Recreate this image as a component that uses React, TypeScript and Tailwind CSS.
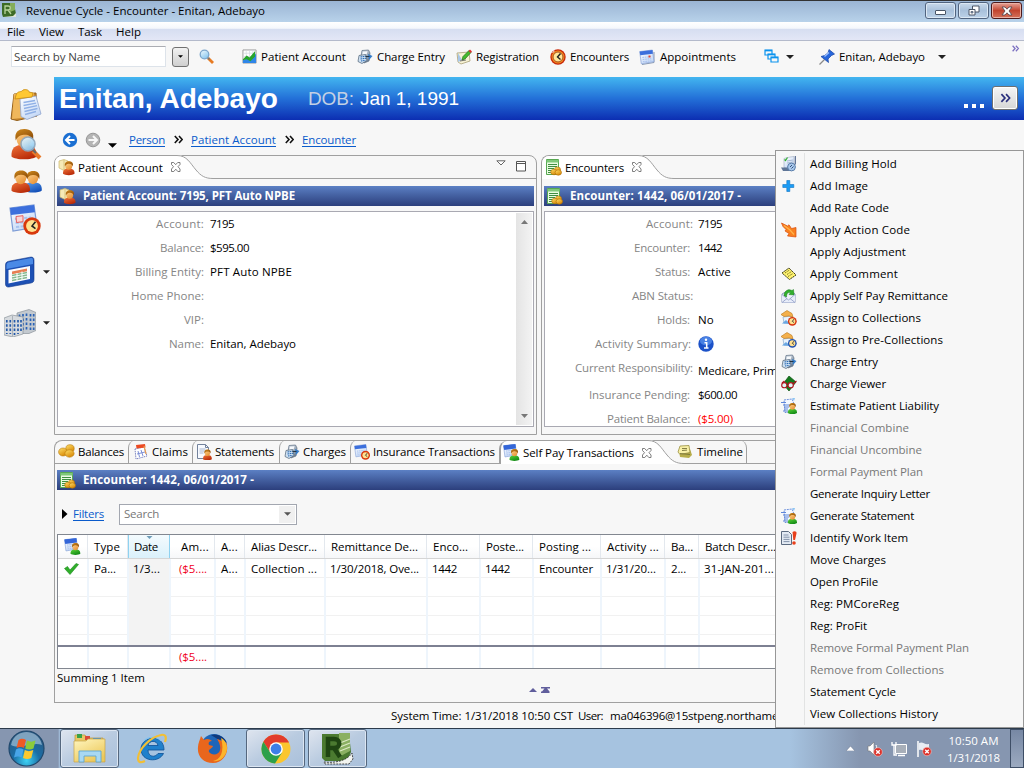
import React, { useLayoutEffect, useRef, useState } from "react";
import type { ReactNode } from "react";

/* ---------- text ---------- */

/** One line of text whose letter spacing is tuned so that it fills exactly `w` pixels. */
function Fit({ w, children, className = "" }: { w: number; children: string; className?: string }) {
  const ref = useRef<HTMLSpanElement>(null);
  const [spacing, setSpacing] = useState(0);
  useLayoutEffect(() => {
    if (ref.current) {
      const natural = ref.current.getBoundingClientRect().width;
      setSpacing((w - natural) / children.length);
    }
  }, [w, children]);
  return (
    <span className={`block shrink-0 whitespace-pre ${className}`} style={{ width: w }}>
      <span ref={ref} style={{ letterSpacing: spacing }}>
        {children}
      </span>
    </span>
  );
}

/* ---------- icons ---------- */

function Svg({ w = 16, h = 16, vb, children, className = "" }: { w?: number; h?: number; vb?: string; children: ReactNode; className?: string }) {
  return (
    <svg width={w} height={h} viewBox={vb ?? `0 0 ${w} ${h}`} className={`block shrink-0 ${className}`} fill="none">
      {children}
    </svg>
  );
}

function Gradients() {
  const list: [string, string, string][] = [
    ["gOrange", "#ffcf7a", "#c96a10"],
    ["gRed", "#f0743a", "#b82a08"],
    ["gBlue", "#5aa2ee", "#1450b8"],
    ["gGreen", "#5fd83a", "#128a16"],
    ["gPaper", "#ffffff", "#c4d8f6"],
    ["gGold", "#ffe06a", "#d98a08"],
    ["gYellow", "#fff6bf", "#ecc85a"],
    ["gGrey", "#dfe6ee", "#6f8195"],
    ["gGlass", "#f0faff", "#8cc8ee"],
    ["gHead", "#ffd690", "#e8953a"],
    ["gHair", "#d08a1c", "#8c4c08"],
  ];
  return (
    <svg width="0" height="0" className="absolute">
      <defs>
        {list.map(([id, a, b]) => (
          <linearGradient key={id} id={id} x1="0" y1="0" x2="0.6" y2="1">
            <stop offset="0" stopColor={a} />
            <stop offset="1" stopColor={b} />
          </linearGradient>
        ))}
      </defs>
    </svg>
  );
}

const Bust = ({ x, y, s = 1, fill = "url(#gRed)" }: { x: number; y: number; s?: number; fill?: string }) => (
  <g transform={`translate(${x} ${y}) scale(${s})`}>
    <path d="M0 11C-.2 7.500 1.500 6.300 5 6.300s5.200 1.200 5 4.700c-1.500 1.500-8.500 1.500-10 0Z" fill={fill} />
    <ellipse cx="5" cy="3.900" rx="3" ry="3.500" fill="url(#gHead)" />
    <path d="M1.700 4.600C1 1.200 2.800 0 5.200 0s4.200 1.400 3.300 4.600C8 3 7 2.300 5.400 2.300 4 2.300 2.600 2.600 1.700 4.600Z" fill="url(#gHair)" />
  </g>
);

const Clock = ({ x, y, r, rim = "#d8380c" }: { x: number; y: number; r: number; rim?: string }) => (
  <g>
    <circle cx={x} cy={y} r={r} fill={rim} />
    <circle cx={x} cy={y} r={r * 0.68} fill="#ffe090" />
    <path d={`M${x + r * 0.4} ${y - r * 0.5}L${x} ${y}L${x + r * 0.4} ${y + r * 0.3}`} stroke="#222" strokeWidth={r * 0.18} />
  </g>
);

const Cal = ({ x, y, s = 1 }: { x: number; y: number; s?: number }) => (
  <g transform={`translate(${x} ${y}) scale(${s})`}>
    <path d="M0 1.500L12 0l1.500 11L1.500 13Z" fill="url(#gPaper)" stroke="#7d9cd6" strokeWidth=".6" />
    <path d="M0 1.500L12 0l.5 3.600L.5 5Z" fill="#3c6fdc" />
    <path d="M2.500 7l8-.8M2.800 9l8-.8M3 11l8-.8" stroke="#a9c2ee" strokeWidth="1" strokeDasharray="1.600 .7" />
  </g>
);

const AppIcon = () => (
  <Svg w={15} h={16}>
    <path d="M0 1h12l2 11-3 3H1L0 12Z" fill="#3d6b26" />
    <path d="M8 1h5v7l-5 2Z" fill="#84ad5b" />
    <path d="M3 12V4h3c3 0 3 4 0 4H3m3 0l3 4" stroke="#b8d49c" strokeWidth="1.300" />
    <path d="M1 15l10-1 3-3v4Z" fill="#dfe5da" />
  </Svg>
);
const Magnifier = () => (
  <Svg>
    <path d="M9 9l5 5" stroke="#e77b22" strokeWidth="2.800" />
    <path d="M8 8l2.500 2.500" stroke="#777" strokeWidth="1.600" />
    <circle cx="5.500" cy="5.500" r="4.300" fill="url(#gGlass)" stroke="#7ca6cc" strokeWidth="1.300" />
  </Svg>
);
const ChartIcon = () => (
  <Svg w={15} h={15} vb="0 0 16 16">
    <path d="M1 1h14v14H1Z" fill="#fff" stroke="#9a9a9a" />
    <path d="M1 4.500h14M1 8h14M4.500 1v14M8 1v14M11.500 1v14" stroke="#cfd6dd" strokeWidth=".7" />
    <path d="M1 12l4-2 3 1 7-6v10H1Z" fill="#2f86e8" />
    <path d="M1 11l4-4 3 2 6-7v6l-5 5-4-2-4 1Z" fill="#27a52a" />
  </Svg>
);
const ChargeIcon = () => (
  <Svg>
    <path d="M5 1.500l6.500-.5L13 4l-1 8-5 2L3.500 10Z" fill="url(#gGrey)" stroke="#5d6f82" strokeWidth=".7" />
    <path d="M6 2.800l4.500-.5-.8 3-4.500.6Z" fill="#f6f9fc" />
    <path d="M2 6.500L8.500 5.500 10 11.500 5 14.500 1 12.500Z" fill="#cfe1f2" stroke="#4c6074" strokeWidth=".7" />
    <path d="M3.500 8l5-.7M3.500 10l5.500-.7M4 12l4.500-.7" stroke="#2466b0" strokeWidth="1.100" strokeDasharray="1.500 .6" />
    <path d="M11 5l4.500 2-3.500 4Z" fill="#347cc9" />
    <path d="M8.500 7.500h4" stroke="#234" strokeWidth="1" />
  </Svg>
);
const PencilIcon = () => (
  <Svg>
    <path d="M1 4l12-1 1 9-9 3-3-2Z" fill="#f7f2d4" stroke="#a99f77" strokeWidth=".8" />
    <path d="M2 4l4 7-4 2Z" fill="#a8c7ea" />
    <path d="M6 11l1-3.500L13 1.500l2 2L9 10Z" fill="#45bb2d" stroke="#207017" strokeWidth=".7" />
    <path d="M12.500 2l1.500-1.500L16 2.500 14.500 4Z" fill="#dd3030" />
    <path d="M4 12l6-1" stroke="#555" strokeWidth=".8" />
  </Svg>
);
const ClockIcon = () => (
  <Svg>
    <circle cx="8" cy="8" r="7.700" fill="#c9290a" />
    <circle cx="8" cy="8" r="6.400" fill="#f08a20" />
    <circle cx="8" cy="8" r="4.900" fill="#ffe79a" stroke="#8c2a08" strokeWidth=".7" />
    <path d="M10.500 4.500L7.500 8l3 2.500" stroke="#222" strokeWidth="1.400" />
    <path d="M2.500 3.500l2-1.300" stroke="#fff" strokeWidth="1" />
  </Svg>
);
const CalIcon = () => (
  <Svg>
    <path d="M3 15.500l12-2V3" stroke="#8b9ab0" strokeWidth="1" />
    <Cal x={0.700} y={1} s={1.060} />
    <path d="M9.500 6.500h2v2h-2Z" fill="#e8452c" />
  </Svg>
);
const WindowsIcon = () => (
  <Svg w={15} h={15}>
    {[[1, 1], [4, 5], [7, 8]].map(([x, y]) => (
      <g key={x}>
        <path d={`M${x} ${y}h7v5h-7Z`} fill="#f7f7f7" stroke="#0b93ee" strokeWidth="1.200" />
        <path d={`M${x} ${y + 0.6}h7`} stroke="#0b93ee" strokeWidth="1.500" />
      </g>
    ))}
  </Svg>
);
const PinIcon = () => (
  <Svg>
    <path d="M.5 15.500l5-5" stroke="#8a8a8a" strokeWidth="1.300" />
    <path d="M2 7.500l3.500-1L9 4l1-3.500 5.500 4.500-3 1.500L9 10l.5 3.500Z" fill="#2867dc" stroke="#1743a0" strokeWidth=".7" />
    <path d="M5.500 7.500L10 3.500" stroke="#9dc1ff" strokeWidth="1.400" />
  </Svg>
);
const Down = ({ w = 8, h = 4, fill = "#222" }: { w?: number; h?: number; fill?: string }) => (
  <Svg w={w} h={h} vb="0 0 8 4">
    <path d="M0 0h8L4 4Z" fill={fill} />
  </Svg>
);
const Chevrons = ({ w = 9, h = 9, color = "#111", sw = 1.6 }: { w?: number; h?: number; color?: string; sw?: number }) => (
  <Svg w={w} h={h} vb="0 0 9 9">
    <path d="M.8 1L4 4.500.8 8M5 1l3.200 3.500L5 8" stroke={color} strokeWidth={sw} />
  </Svg>
);
const CloseX = () => (
  <Svg w={12} h={12}>
    <path d="M1.500 1.500h2.200l2 2.200 2-2.200h2.300v2L8 5.700l2 2.300v2.500H7.800l-2-2.300-2 2.300H1.500V8l2-2.300-2-2.200Z" stroke="#707070" strokeWidth=".9" fill="#fff" />
  </Svg>
);
const PersonFolder = () => (
  <Svg w={17} h={17}>
    <path d="M1 2l5-1.500L10 2v8l-4 1.500L1 9Z" fill="#f6eab6" stroke="#cbb76d" strokeWidth=".7" />
    <path d="M6 1v10" stroke="#cbb76d" strokeWidth=".7" />
    <Bust x={5} y={2.200} s={1.150} />
  </Svg>
);
const ListCoins = () => (
  <Svg w={17} h={17}>
    <path d="M1.500.5h12v15h-12Z" fill="#eafbe2" stroke="#57a851" />
    <path d="M1.500 1h12v2.500h-12Z" fill="#7fc87a" />
    <path d="M3 5.500h9M3 7.500h9M3 9.500h6M3 11.500h4M3 13.500h4" stroke="#3f8e42" strokeWidth="1" />
    <ellipse cx="12.500" cy="10.500" rx="3" ry="2.600" fill="url(#gGold)" stroke="#b06c04" strokeWidth=".6" />
    <ellipse cx="9" cy="13" rx="3.300" ry="2.800" fill="url(#gGold)" stroke="#b06c04" strokeWidth=".6" />
    <ellipse cx="13.300" cy="13.500" rx="3.200" ry="2.700" fill="url(#gGold)" stroke="#b06c04" strokeWidth=".6" />
  </Svg>
);
const Coins = () => (
  <Svg w={17} h={15}>
    <ellipse cx="12" cy="4.500" rx="4.200" ry="3.800" fill="url(#gGold)" stroke="#b87a08" strokeWidth=".6" />
    <ellipse cx="5" cy="8" rx="4.400" ry="4" fill="url(#gGold)" stroke="#b87a08" strokeWidth=".6" />
    <ellipse cx="11.500" cy="9.500" rx="4.600" ry="3.700" fill="url(#gGold)" stroke="#b87a08" strokeWidth=".6" />
  </Svg>
);
const ClaimsIcon = () => (
  <Svg>
    <path d="M2 5l9-2 3 9-11 3Z" fill="#fff" stroke="#6b74b8" strokeWidth=".9" strokeDasharray="1.500 .8" />
    <path d="M3 1l9-1 .5 3.500-9 1Z" fill="#ec4a22" />
    <path d="M5 7l1.500 6M8 6l2 6M4 10l8-2" stroke="#7c8fd6" strokeWidth="1" />
    <path d="M11 2l2 8" stroke="#e89a50" strokeWidth="1.200" />
  </Svg>
);
const StatementIcon = () => (
  <Svg>
    <path d="M1.500.5h8l3 3v11h-11Z" fill="#f7faff" stroke="#73829c" />
    <path d="M9.500.5v3h3" stroke="#73829c" />
    <path d="M3.500 5h6M3.500 7h6M3.500 9h4" stroke="#a8b6cf" />
    <Bust x={7} y={5.500} s={0.880} />
  </Svg>
);
const CalClock = () => (
  <Svg>
    <Cal x={0.500} y={0.500} s={0.950} />
    <Clock x={11.500} y={11.300} r={4.500} />
  </Svg>
);
const CalPerson = () => (
  <Svg w={17} h={17}>
    <Cal x={0.500} y={0.200} s={0.980} />
    <path d="M.6 1.600L12.300.200l.5 4.400L1.200 6Z" fill="#3466d8" />
    <Bust x={6.500} y={5} s={0.980} fill="url(#gGreen)" />
  </Svg>
);
const TimelineIcon = () => (
  <Svg w={16} h={14}>
    <path d="M2 5l11-1 2 6-3 3-9-1Z" fill="#b7ad4a" />
    <path d="M3 1l9-.5 1 7-10 2L1 7Z" fill="#f7efa6" stroke="#9a9140" strokeWidth=".8" />
    <path d="M5 3.500h5M5 5.500l5-.4M3 8.500l10 1" stroke="#777338" strokeWidth=".9" />
  </Svg>
);
const Check = () => (
  <Svg w={15} h={12}>
    <path d="M.5 5.500L3.500 3.500l2.500 3.500 6-6.500 2.500 1L6 11.500Z" fill="#2fae2a" stroke="#1b8a1e" strokeWidth=".6" />
  </Svg>
);
const Info = () => (
  <Svg>
    <circle cx="8" cy="8" r="7.700" fill="#1c52c8" />
    <ellipse cx="8" cy="5" rx="6" ry="4.300" fill="#5b95ef" opacity=".7" />
    <path d="M6.500 6.700h2.200v5M6 12h4.500" stroke="#fff" strokeWidth="1.500" />
    <circle cx="8" cy="3.800" r="1.200" fill="#fff" />
  </Svg>
);

/* context menu icons */
const HoldIcon = () => (
  <Svg>
    <path d="M3 2.500l6-1.500 4-.5v9l-7 3-3-1Z" fill="url(#gPaper)" stroke="#9aa8c0" strokeWidth=".6" />
    <path d="M3.500 3.500l1 1 2-3" stroke="#2fae2a" strokeWidth="1.200" />
    <path d="M6 5l6-1M6 7l6-1" stroke="#a9bad4" />
    <path d="M0 11.500h7l3 3.500H2Z" fill="#5f7596" />
    <circle cx="10.500" cy="11" r="3.900" fill="#a9c8ec" stroke="#587ca8" />
    <path d="M9 11l2-2M10.500 12.500l2-2" stroke="#33527c" />
    <path d="M14.300 0v8.500" stroke="#3f5680" />
  </Svg>
);
const PlusIcon = () => (
  <Svg>
    <path d="M5.800 2.500h3v4h4v3h-4v4h-3v-4h-4v-3h4Z" fill="#1a9bf4" stroke="#0d74c4" strokeWidth=".6" />
  </Svg>
);
const BoltIcon = () => (
  <Svg>
    <path d="M.5 1l6 3 1.500-1.200 2.500 3.700 4.500-1v9.500l-8.500-1 1.500-2.500-4-2.500 1-1.500-3-3Z" fill="#f9801f" stroke="#d94a0b" strokeWidth=".7" />
    <path d="M3 3.500l6 4.500 4 4.500" stroke="#ffb44a" strokeWidth="1.200" />
  </Svg>
);
const NoteIcon = () => (
  <Svg>
    <path d="M1 7l7-5 7 7-6.500 4.500Z" fill="#fff36e" stroke="#3a3a18" strokeWidth="1" strokeDasharray="2 .6" />
    <path d="M4 7l4.500-3M6 8.500l4.500-3M7 10.500l5-3" stroke="#6b6420" strokeWidth=".9" strokeDasharray="1.300 .6" />
  </Svg>
);
const EnvelopeIcon = () => (
  <Svg>
    <path d="M1 6l7-4 6 4v8.500H1Z" fill="#eef2fb" stroke="#7e8cb8" strokeWidth=".9" />
    <path d="M3 8C3 3 7 .5 11 2.500L12.500 1.500 13 7l-5-.5 1.600-1.700C7 4 5.500 5.500 5.500 9Z" fill="#32b02d" stroke="#187a1a" strokeWidth=".5" />
    <path d="M1 6.500l6.500 5.500L14 6.500v8H1Z" fill="#e8edfa" />
    <path d="M1 6.500l6.500 5.500L14 6.500M1 14.500l5-4M14 14.500l-5-4" stroke="#8d99c4" strokeWidth=".8" />
  </Svg>
);
const AssignIcon = ({ rim }: { rim: string }) => (
  <Svg>
    <path d="M2 7l9-1 1 6-9 1Z" fill="#e9f3fd" stroke="#8aa9cc" strokeWidth=".7" />
    <path d="M0 4.500l6-4 5 3 1 3.500-4-1-5 .5Z" fill="#f4b04c" stroke="#b87514" strokeWidth=".6" />
    <path d="M1 13.500l4-3.500 4 4Z" fill="#6aa7e2" />
    <Clock x={11.300} y={11.300} r={4.400} rim={rim} />
  </Svg>
);
const ViewerIcon = () => (
  <Svg>
    <path d="M8 0l7 6-7 9-6-7Z" fill="#14791c" stroke="#0a5210" strokeWidth=".7" />
    <circle cx="3.300" cy="9.200" r="2.600" fill="#dff6f6" stroke="#b0141e" strokeWidth="1.100" />
    <circle cx="9.700" cy="9.200" r="2.600" fill="#dff6f6" stroke="#b0141e" strokeWidth="1.100" />
    <path d="M1 7l2.500-2M12 8l3.500-3" stroke="#b0141e" strokeWidth="1.200" />
  </Svg>
);
const PapersPerson = () => (
  <Svg>
    <path d="M3 2l8-1 2 5-1 8-8 .5Z" fill="#f4f8ff" stroke="#5f86d8" strokeWidth=".9" strokeDasharray="2 .8" />
    <path d="M0 4.500h5M2 7h7M3 9h5M3 11h4M2 13h5" stroke="#5f86d8" strokeWidth="1" />
    <path d="M11 0h3l-1 3Z" fill="#8cc4f4" />
    <Bust x={6.800} y={5} s={0.920} fill="url(#gGreen)" />
  </Svg>
);
const WorkIcon = () => (
  <Svg>
    <path d="M.5 1.500h7l3 3v10H.5Z" fill="#e3eaf3" stroke="#5c6b80" />
    <path d="M2.500 5h5M2.500 7.200h6M2.500 9.400h6M2.500 11.600h6" stroke="#8493aa" />
    <path d="M11.500 2c2-1.500 4.500-.5 4 1.500L14 10h-1.700Z" fill="#e8401c" />
    <circle cx="13" cy="13" r="1.800" fill="#e8401c" />
  </Svg>
);

/* side bar icons */
const ClipboardIcon = () => (
  <Svg w={32} h={33}>
    <path d="M4 5l22-1 1 23-20 4.500L1 30Z" fill="#c9872c" stroke="#94601c" />
    <path d="M4 5l20-1-3 24L2 30Z" fill="#efb75c" />
    <path d="M10 10l16-3 5 18-14 5.500-6-3Z" fill="url(#gPaper)" stroke="#90a6cf" strokeWidth=".8" />
    <path d="M13.500 13.500l11.500-2M13.500 16.500l12.500-2.300M14 19.500l13-2.800M14.500 22.500l13-3M15 25.500l11-3" stroke="#8fb0e6" strokeWidth="1.300" />
    <path d="M6 6c2-5 5-2 7-5 3-1 6 0 6 2l4 1-1 4-17 2Z" fill="#ffc832" stroke="#c98c0e" strokeWidth=".8" />
  </Svg>
);
const PersonSearch = () => (
  <Svg w={32} h={32}>
    <Bust x={0.500} y={0} s={2.500} />
    <path d="M22 22l7 7" stroke="#e8792a" strokeWidth="4" />
    <path d="M21 20l4 4" stroke="#666" strokeWidth="2" />
    <circle cx="17" cy="15" r="7" fill="url(#gGlass)" stroke="#8fa9c0" strokeWidth="1.600" opacity=".95" />
  </Svg>
);
const People = () => (
  <Svg w={32} h={24}>
    <Bust x={13} y={1} s={1.780} fill="url(#gBlue)" />
    <Bust x={0.500} y={0.500} s={1.850} />
  </Svg>
);
const BigCalClock = () => (
  <Svg w={33} h={33}>
    <Cal x={1} y={1} s={2} />
    <path d="M7 12.500l7-.8v6l-6.500.8Z" stroke="#e66060" fill="#fbd5d5" />
    <Clock x={23} y={22} r={8.700} />
  </Svg>
);
const BigForm = () => (
  <Svg w={30} h={32}>
    <path d="M.5 8.500C1 6 2 5.500 5 5L25 1.200c2.500-.4 4 .3 4 3V23c0 2.500-.5 3.300-3 4L4 31c-2 .3-3.500-.6-3.500-3Z" fill="#1d50b4" stroke="#143a8c" strokeWidth=".6" />
    <path d="M1.500 9C2 6.500 3 6.300 5 6L25 2.200c2-.3 3 0 3 2V8L1.500 13Z" fill="#4a8ae6" />
    <path d="M3.500 14L25 10v13L3.500 27.500Z" fill="#fbfcff" />
    <path d="M7 15.500l15-3v2.700l-15 3Z" fill="#e77e52" />
    <path d="M7 19.500l15-3M7 22l15-3M7 24.500l15-3" stroke="#86b98e" strokeWidth="1.300" />
    <path d="M12 17v8M17 15.500V24" stroke="#fff" />
  </Svg>
);
const Buildings = () => (
  <Svg w={32} h={28}>
    <path d="M13 4l12-3.500 7 3v18l-7 3H13Z" fill="#c3c9cf" stroke="#7d868f" strokeWidth=".6" />
    <path d="M15.500 5.500v16M19 5v16M22.500 4.500v17M26.500 5v16M29.700 5v16" stroke="#2a62b6" strokeWidth="1.700" strokeDasharray="2.500 2" />
    <path d="M0 9l8-3 11 2v17l-10 3L0 26Z" fill="#d6dade" stroke="#7d868f" strokeWidth=".6" />
    <path d="M2.800 11v14M6.300 11v14M10.500 11v15M14 11v14M17 11v12" stroke="#2459a8" strokeWidth="1.700" strokeDasharray="2.500 1.800" />
    <path d="M8.500 7v20.500" stroke="#979fa7" strokeWidth=".7" />
  </Svg>
);

/* task bar icons */
const StartOrb = () => (
  <Svg w={37} h={37}>
    <defs>
      <radialGradient id="orb" cx=".5" cy=".85" r=".75">
        <stop offset="0" stopColor="#3ed2f4" />
        <stop offset=".5" stopColor="#1a6ea6" />
        <stop offset="1" stopColor="#2b5c86" />
      </radialGradient>
    </defs>
    <circle cx="18.500" cy="18.500" r="17.500" fill="url(#orb)" stroke="#20486c" strokeWidth="1.200" />
    <path d="M3 15C5 5 13 2 18.500 2S32 5 34 15C25 11 12 20 3 15Z" fill="#c4dcec" opacity=".55" />
    <path d="M10.500 10c3-2 5-1.500 7.500 0l-2 8c-2.500-1.500-4.500-1.500-7.500 0Z" fill="#ee5a25" />
    <path d="M19 10.500c3 1.500 5 1.500 8.500 0l-2 8c-3 1.500-5.500 1.300-8.300 0Z" fill="#8ccb3c" />
    <path d="M8 19.500c3-2 5-1.500 7.500 0l-2 8c-2.500-1.500-4.500-1.500-7.500 0Z" fill="#48a5e8" />
    <path d="M16.800 20c3 1.500 5 1.500 8.500 0l-2 8c-3 1.500-5.500 1.300-8.300 0Z" fill="#fcc92e" />
  </Svg>
);
const Explorer = () => (
  <Svg w={34} h={31}>
    <path d="M2 2h10l2 3h16v23H2Z" fill="#e8c766" stroke="#b9963c" strokeWidth=".7" />
    <path d="M4 1h5v4H4Z" fill="#39a148" />
    <path d="M12 3h5v4h-5Z" fill="#d84a3a" />
    <path d="M20 5h8v3h-8Z" fill="#3e8fd8" />
    <path d="M1 8h12l2-2h17v23H1Z" fill="url(#gYellow)" stroke="#c6a548" strokeWidth=".7" />
    <path d="M6 18h22v11h-5v-6H11v6H6Z" fill="#a8d8f2" stroke="#5fa6d0" strokeWidth=".9" />
  </Svg>
);
const IE = () => (
  <Svg w={32} h={32}>
    <path d="M28 17H12c0 7 7 8 10 3.500h5.500C23 30 5 29 5 16S28 0 28 17Zm-6-4.500c-1-5.500-9-5.500-10 0Z" fill="#1f80cc" stroke="#0d4f94" strokeWidth=".8" />
    <path d="M8 8C12 3 21 3 25 8" stroke="#7cc4f4" strokeWidth="1.200" />
    <path d="M29 9c2-6 0-8-4-7C15 4 3 15 2 25c0 5 3 5 7 3" stroke="#f2bf35" strokeWidth="2.200" />
  </Svg>
);
const Firefox = () => (
  <Svg w={32} h={32}>
    <circle cx="17" cy="14" r="13" fill="#1d65b8" />
    <path d="M14 2c7-2 14 2 16 8-3-3-6-4-8-3Z" fill="#0f3a7e" />
    <path d="M4 3l3 4c3-2 6-1 8 1-3 0-4 2-3 4l4 1c-1 3-5 3-4 6 3 4 10 3 11-2 1-4-1-8-3-11 5 1 8 5 8 5l1-2c4 9-2 21-13 21C6 30 0 23 1 14c0-4 2-7 3-11Z" fill="#e9661c" />
    <path d="M24 5c6 3 8 11 4 17-3 5-8 7-12 6 7-1 12-9 8-23Z" fill="#fbb52c" />
  </Svg>
);
const Chrome = () => (
  <Svg w={30} h={30}>
    <circle cx="15" cy="15" r="14.500" fill="#fbc62e" />
    <path d="M2.400 7.700A14.500 14.500 0 0 1 27.600 7.700L28 8.500H15L9 18Z" fill="#e23c2c" />
    <path d="M2.400 7.700A14.500 14.500 0 0 0 14 29.500L21 18.500 9 18Z" fill="#2da04b" />
    <circle cx="15" cy="15" r="6.800" fill="#fff" />
    <circle cx="15" cy="15" r="5.400" fill="#3d7fe8" />
  </Svg>
);
const GreenR = () => (
  <Svg w={33} h={33}>
    <path d="M1 2h27l2 18-4 9H4L1 26Z" fill="#4b7a30" />
    <path d="M18 1h11v18l-11 6Z" fill="#8bb062" />
    <path d="M19 11l10-4M19 15l10-4M19 19l10-4" stroke="#dbe9c4" strokeWidth="1.200" />
    <path d="M7 25V7h6c7 0 7 9 0 9H7m6 0l6 9" stroke="#1f4512" strokeWidth="4.500" />
    <path d="M3 30c9 1 22 0 28-9l1 6-4 5H4Z" fill="#f2f4f0" stroke="#222" strokeWidth=".8" strokeDasharray="2 1" />
  </Svg>
);
const RedBadge = ({ x, y }: { x: number; y: number }) => (
  <g>
    <circle cx={x} cy={y} r="4.300" fill="#dc2f28" stroke="#f4c8c4" strokeWidth=".6" />
    <path d={`M${x - 1.8} ${y - 1.8}l3.600 3.600m0-3.600l-3.600 3.600`} stroke="#fff" strokeWidth="1.400" />
  </g>
);
const Speaker = () => (
  <Svg>
    <path d="M1 5h2l4-4v13L3 10H1Z" fill="#fff" stroke="#777" strokeWidth=".6" />
    <path d="M9 4c1 2 1 4 0 6" stroke="#fff" />
    <RedBadge x={11} y={11} />
  </Svg>
);
const Network = () => (
  <Svg>
    <path d="M4.500 3.500h11v9h-11Z" fill="#a8afb9" stroke="#fff" />
    <path d="M7 14.500h7" stroke="#fff" strokeWidth="1.500" />
    <path d="M1 1v3h4V1M3 4v10h3" stroke="#fff" strokeWidth="1.300" />
  </Svg>
);
const Flag = () => (
  <Svg>
    <path d="M2 0v16" stroke="#fff" strokeWidth="1.500" />
    <path d="M3 2c4-2 5 2 10 1v7c-5 1-6-2-10-1Z" fill="#e9edf3" />
    <RedBadge x={11} y={10.500} />
  </Svg>
);

/* ---------- window chrome ---------- */

const captionBtn = "flex items-center justify-center h-[17px] w-[31px] rounded-[3px] border border-[#51647f] bg-gradient-to-b from-[#c9d9ea] via-[#a9c1db] to-[#bcd2e8] shadow-[inset_0_0_0_1px_#dce8f4]";

function TitleBar() {
  return (
    <div className="flex h-[22px] items-center border-t border-[#333] bg-gradient-to-b from-[#9bb5d4] to-[#b8d2ea] pl-[2px]">
      <div className="-mt-[4px]"><AppIcon /></div>
      <Fit w={239} className="-mt-[1px] ml-[9px]">Revenue Cycle - Encounter - Enitan, Adebayo</Fit>
      <div className="mr-[2px] ml-auto flex gap-[2px] pb-[2px]">
        <div className={captionBtn}>
          <div className="mt-[4px] h-[5px] w-[11px] rounded-[1px] border border-[#4a5566] bg-white" />
        </div>
        <div className={captionBtn}>
          <Svg w={12} h={11}>
            <path d="M4.500 1h6.500v6H4.500Z" fill="#fff" stroke="#4a5566" />
            <path d="M1 4.500h6v5.500H1Z" fill="#fff" stroke="#4a5566" />
            <path d="M3 6.500h2v1.500H3Z" fill="#91abc9" stroke="#4a5566" strokeWidth=".7" />
          </Svg>
        </div>
        <div className="flex h-[17px] w-[31px] items-center justify-center rounded-[3px] border border-[#4d1a1c] bg-gradient-to-b from-[#e6a197] via-[#c1442f] to-[#d4705a] shadow-[inset_0_0_0_1px_#eab2a6]">
          <Svg w={12} h={10}>
            <path d="M1 1h3l2 2.200L8 1h3L8 5l3 4H8L6 6.800 4 9H1l3-4Z" fill="#fff" stroke="#5a4a50" strokeWidth=".9" />
          </Svg>
        </div>
      </div>
    </div>
  );
}

function MenuBar() {
  return (
    <div className="flex h-[19px] items-center border-b border-[#b4bacb] bg-[linear-gradient(#ffffff_0%,#f4f7fc_35%,#d6def1_40%,#e3e7f6_100%)] pt-[2px] pl-[7px]">
      <Fit w={18}>File</Fit>
      <Fit w={25} className="ml-[14px]">View</Fit>
      <Fit w={24} className="ml-[14px]">Task</Fit>
      <Fit w={25} className="ml-[14px]">Help</Fit>
    </div>
  );
}

function ToolBar() {
  return (
    <div className="relative flex h-[36px] items-center pb-[5px] pl-[11px]">
      <div className="flex h-[21px] w-[155px] items-center border border-[#dde3ea] border-t-[#abadb3] bg-white pl-[2px] text-[#444]">
        <Fit w={86}>Search by Name</Fit>
      </div>
      <div className="ml-[6px] flex h-[20px] w-[17px] items-center justify-center rounded-[3px] border border-[#707070] bg-gradient-to-b from-[#f2f2f2] to-[#cfcfcf]">
        <Down w={5} h={3} fill="#000" />
      </div>
      <div className="ml-[10px]"><Magnifier /></div>
      <div className="ml-[27px]"><ChartIcon /></div>
      <Fit w={85} className="ml-[4px]">Patient Account</Fit>
      <div className="ml-[11px]"><ChargeIcon /></div>
      <Fit w={68} className="ml-[4px]">Charge Entry</Fit>
      <div className="ml-[11px]"><PencilIcon /></div>
      <Fit w={63} className="ml-[4px]">Registration</Fit>
      <div className="ml-[11px]"><ClockIcon /></div>
      <Fit w={59} className="ml-[4px]">Encounters</Fit>
      <div className="ml-[10px]"><CalIcon /></div>
      <Fit w={76} className="ml-[5px]">Appointments</Fit>
      <div className="ml-[28px]"><WindowsIcon /></div>
      <div className="ml-[7px]"><Down /></div>
      <div className="ml-[25px]"><PinIcon /></div>
      <Fit w={86} className="ml-[4px]">Enitan, Adebayo</Fit>
      <div className="ml-[13px]"><Down /></div>
      <div className="mr-[4px] mb-[17px] ml-auto"><Chevrons w={9} h={7} color="#7b6fc0" /></div>
    </div>
  );
}

function SideBar() {
  return (
    <div className="flex w-[54px] shrink-0 flex-col pt-[12px] pl-[10px]">
      <ClipboardIcon />
      <div className="mt-[7px] ml-[1px]"><PersonSearch /></div>
      <div className="mt-[9px] ml-[1px]"><People /></div>
      <div className="mt-[10px] -ml-[1px]"><BigCalClock /></div>
      <div className="mt-[19px] -ml-[5px] flex items-center gap-[8px]"><BigForm /><Down w={7} h={4} /></div>
      <div className="mt-[21px] -ml-[6px] flex items-center gap-[7px]"><Buildings /><Down w={7} h={4} /></div>
    </div>
  );
}

function Banner() {
  return (
    <div className="flex h-[43px] items-center bg-[linear-gradient(#43b6f0,#2370d8_50%,#0c2eb2)] pr-[6px] pl-[5px] font-[Liberation_Sans,Arial,sans-serif] text-white">
      <Fit w={219} className="text-[28px] leading-[40px] font-bold">Enitan, Adebayo</Fit>
      <Fit w={46} className="ml-[30px] text-[19px] text-[#c3d0e4]">DOB:</Fit>
      <Fit w={99} className="ml-[6px] text-[19px]">Jan 1, 1991</Fit>
      <div className="mt-[14px] ml-auto flex gap-[4px]">
        <i className="size-[4px] bg-white" />
        <i className="size-[4px] bg-white" />
        <i className="size-[4px] bg-white" />
      </div>
      <div className="mb-[2px] ml-[8px] flex h-[24px] w-[26px] items-center justify-center rounded-[3px] border border-[#707070] bg-gradient-to-b from-[#f6f6f6] to-[#d6d6d6] shadow-[inset_0_0_0_1px_#fff]">
        <Chevrons w={11} h={10} color="#2a2f7c" sw={1.5} />
      </div>
    </div>
  );
}

const link = "text-[#0a5bcb] underline underline-offset-[1.5px]";

function Breadcrumb() {
  return (
    <div className="flex h-[35px] items-center pt-[4px] pl-[8px]">
      <Svg w={16} h={16}>
        <circle cx="8" cy="8" r="7.200" fill="#1b6fd2" />
        <path d="M12.500 8H4.500M8 4L4 8l4 4" stroke="#fff" strokeWidth="2" />
      </Svg>
      <div className="ml-[7px]">
        <Svg w={16} h={16}>
          <circle cx="8" cy="8" r="6.800" fill="#b4b4b4" stroke="#979797" />
          <path d="M3.500 8h8M8 4l4 4-4 4" stroke="#f7f7f7" strokeWidth="2" />
        </Svg>
      </div>
      <div className="mt-[11px] ml-[7px]"><Down w={9} h={5} fill="#000" /></div>
      <Fit w={36} className={`ml-[12px] ${link}`}>Person</Fit>
      <div className="ml-[9px]"><Chevrons /></div>
      <Fit w={85} className={`ml-[8px] ${link}`}>Patient Account</Fit>
      <div className="ml-[9px]"><Chevrons /></div>
      <Fit w={54} className={`ml-[8px] ${link}`}>Encounter</Fit>
    </div>
  );
}

/* ---------- view panels ---------- */

const TabCurve = () => (
  <Svg w={36} h={24}>
    <path d="M0 0C10 0 13 8 19 15c5 6 9 8.500 17 8.500V24H0Z" fill="#fff" />
    <path d="M0 .5C10 .5 13 8 19 15c5 6 9 8.500 17 8.500" stroke="#a0a0a0" />
  </Svg>
);

const TitleStrip = ({ icon, children, className = "mt-[7px]" }: { icon: ReactNode; children: ReactNode; className?: string }) => (
  <div className={`mx-[2px] flex h-[20px] shrink-0 items-center gap-[7px] bg-gradient-to-b from-[#5c80c4] to-[#2c3f7c] pl-[2px] font-bold text-white ${className}`}>
    {icon}
    {children}
  </div>
);

function ScrollBar() {
  return (
    <div className="my-[1px] mr-[1px] ml-auto flex w-[16px] shrink-0 flex-col items-center justify-between bg-gradient-to-r from-[#e4e4e4] to-[#f3f3f3] py-[7px]">
      <Svg w={7} h={4}><path d="M0 4h7L3.500 0Z" fill="#777" /></Svg>
      <Svg w={7} h={4}><path d="M0 0h7L3.500 4Z" fill="#777" /></Svg>
    </div>
  );
}

const accountFields: [string, number, string, number][] = [
  ["Account:", 48, "7195", 24],
  ["Balance:", 44, "$595.00", 39],
  ["Billing Entity:", 69, "PFT Auto NPBE", 82],
  ["Home Phone:", 73, "", 0],
  ["VIP:", 20, "", 0],
  ["Name:", 35, "Enitan, Adebayo", 86],
];

function PatientAccountPanel() {
  return (
    <section className="flex h-[280px] w-[483px] shrink-0 flex-col rounded-t-[8px] border border-[#a0a0a0]">
      <div className="-mt-[1px] flex h-[24px] shrink-0">
        <div className="mt-[1px] flex w-[122px] items-center rounded-tl-[7px] bg-white pl-[3px]">
          <PersonFolder />
          <Fit w={85} className="ml-[3px]">Patient Account</Fit>
          <div className="z-10 -mr-[5px] mb-[1px] ml-auto"><CloseX /></div>
        </div>
        <TabCurve />
        <div className="flex flex-1 justify-end gap-[10px] border-b border-[#a0a0a0] pr-[10px]">
          <Svg w={10} h={6} className="mt-[5px]"><path d="M.8.800h8.400L5 5Z" stroke="#666" fill="#fff" /></Svg>
          <Svg w={10} h={11} className="mt-[6px]"><path d="M.5.500h9v9.500h-9ZM.5 2.500h9" stroke="#555" fill="#fff" /></Svg>
        </div>
      </div>
      <TitleStrip icon={<PersonFolder />}>
        <Fit w={212}>Patient Account: 7195, PFT Auto NPBE</Fit>
      </TitleStrip>
      <div className="mx-[2px] mt-[5px] mb-[7px] flex flex-1 border border-[#a9a9b2] bg-white">
        <div>
          {accountFields.map(([label, lw, value, vw]) => (
            <div key={label} className="flex h-[24px] items-center">
              <div className="mr-[6px] flex w-[146px] justify-end text-[#868686]"><Fit w={lw}>{label}</Fit></div>
              {value && <Fit w={vw}>{value}</Fit>}
            </div>
          ))}
        </div>
        <ScrollBar />
      </div>
    </section>
  );
}

function EncountersPanel() {
  const label = "flex w-[148px] justify-end text-[#868686]";
  const row = "flex h-[24px] items-center gap-[5px]";
  return (
    <section className="flex h-[280px] flex-1 flex-col rounded-tl-[8px] border border-r-0 border-[#a0a0a0]">
      <div className="-mt-[1px] flex h-[24px] shrink-0">
        <div className="mt-[1px] flex w-[96px] items-center rounded-tl-[7px] bg-white pl-[3px]">
          <ListCoins />
          <Fit w={59} className="ml-[3px]">Encounters</Fit>
          <div className="z-10 mb-[1px] ml-[7px]"><CloseX /></div>
        </div>
        <TabCurve />
        <div className="flex-1 border-b border-[#a0a0a0]" />
      </div>
      <div className="-mr-[2px] flex flex-1 flex-col">
        <TitleStrip icon={<ListCoins />}>
          <Fit w={171}>Encounter: 1442, 06/01/2017 -</Fit>
        </TitleStrip>
        <div className="mx-[2px] mt-[5px] mb-[7px] h-[216px] overflow-hidden border border-[#a9a9b2] bg-white">
          <div className={row}><div className={label}><Fit w={47}>Account:</Fit></div><Fit w={24}>7195</Fit></div>
          <div className={row}><div className={`pr-[3px] ${label}`}><Fit w={56}>Encounter:</Fit></div><Fit w={24}>1442</Fit></div>
          <div className={row}><div className={`pr-[3px] ${label}`}><Fit w={35}>Status:</Fit></div><Fit w={33}>Active</Fit></div>
          <div className={row}><div className={label}><Fit w={61}>ABN Status:</Fit></div></div>
          <div className={row}><div className={`pr-[3px] ${label}`}><Fit w={33}>Holds:</Fit></div><Fit w={16}>No</Fit></div>
          <div className={row}><div className={`pr-[2px] ${label}`}><Fit w={96}>Activity Summary:</Fit></div><Info /></div>
          <div className="flex h-[27px] items-center gap-[5px]">
            <div className={`pb-[3px] ${label}`}><Fit w={118}>Current Responsibility:</Fit></div>
            <Fit w={96} className="mt-[3px]">Medicare, Primary</Fit>
          </div>
          <div className={row}><div className={`pr-[3px] ${label}`}><Fit w={101}>Insurance Pending:</Fit></div><Fit w={39}>$600.00</Fit></div>
          <div className={row}><div className={`pr-[3px] ${label}`}><Fit w={83}>Patient Balance:</Fit></div><Fit w={35} className="text-[#f00]">($5.00)</Fit></div>
        </div>
      </div>
    </section>
  );
}

/* ---------- transactions ---------- */

const tabBase = "flex items-center border-b border-[#a0a0a0]";

function Tabs() {
  const divided = `${tabBase} rounded-tl-[8px] border-l`;
  return (
    <div className="-mt-[1px] flex h-[24px] shrink-0">
      <div className={`${tabBase} w-[73px] pl-[3px]`}><Coins /><Fit w={46} className="ml-[3px]">Balances</Fit></div>
      <div className={`${divided} w-[64px] pl-[4px]`}><ClaimsIcon /><Fit w={36} className="ml-[3px]">Claims</Fit></div>
      <div className={`${divided} w-[87px] pl-[3px]`}><StatementIcon /><Fit w={59} className="ml-[3px]">Statements</Fit></div>
      <div className={`${divided} w-[71px] pl-[4px]`}><ChargeIcon /><Fit w={43} className="ml-[3px]">Charges</Fit></div>
      <div className={`${divided} w-[149px] pl-[3px]`}><CalClock /><Fit w={122} className="ml-[3px]">Insurance Transactions</Fit></div>
      <div className="mt-[1px] flex w-[149px] items-center rounded-tl-[8px] border-l-2 border-[#a0a0a0] bg-white pl-[2px]">
        <CalPerson />
        <Fit w={111} className="ml-[3px]">Self Pay Transactions</Fit>
        <div className="z-10 ml-[7px]"><CloseX /></div>
      </div>
      <TabCurve />
      <div className={`${tabBase} w-[63px] rounded-tr-[8px] border-r`}>
        <div className="-ml-[7px]"><TimelineIcon /></div>
        <Fit w={46} className="ml-[4px]">Timeline</Fit>
      </div>
      <div className="flex-1 border-b border-[#a0a0a0]" />
    </div>
  );
}

type Col = { w: number; head: string; hw: number; cell: string; cw: number; pad: number };
const columns: Col[] = [
  { w: 40, head: "Type", hw: 26, cell: "Pa...", cw: 22, pad: 5 },
  { w: 42, head: "Date", hw: 24, cell: "1/3...", cw: 27, pad: 4 },
  { w: 45, head: "Am...", hw: 28, cell: "($5....", cw: 28, pad: 8 },
  { w: 30, head: "A...", hw: 17, cell: "A...", cw: 17, pad: 5 },
  { w: 80, head: "Alias Descr...", hw: 66, cell: "Collection ...", cw: 66, pad: 5 },
  { w: 102, head: "Remittance De...", hw: 87, cell: "1/30/2018, Ove...", cw: 89, pad: 4 },
  { w: 53, head: "Enco...", hw: 35, cell: "1442", cw: 25, pad: 4 },
  { w: 53, head: "Poste...", hw: 38, cell: "1442", cw: 25, pad: 4 },
  { w: 68, head: "Posting ...", hw: 52, cell: "Encounter", cw: 54, pad: 5 },
  { w: 64, head: "Activity ...", hw: 52, cell: "1/31/20...", cw: 50, pad: 4 },
  { w: 34, head: "Ba...", hw: 22, cell: "2...", cw: 15, pad: 5 },
  { w: 80, head: "Batch Descr...", hw: 71, cell: "31-JAN-201...", cw: 70, pad: 4 },
];
const colLine = "shrink-0 border-r-2 border-[#eef5fc]";

function TransactionTable() {
  return (
    <div className="ml-[2px] h-[135px] shrink-0 overflow-hidden border-y border-l border-[#828790] bg-white">
      <div className="flex h-[24px] border-b border-[#d5d5d5] bg-[linear-gradient(#fff_50%,#f6f7f9)]">
        <div className="flex w-[30px] shrink-0 items-center justify-center border-r border-[#e3e8ee]"><CalPerson /></div>
        {columns.map((c, i) => (
          <div
            key={c.head}
            className={
              i === 1
                ? "relative flex shrink-0 items-center border-x border-[#8fd2f0] bg-gradient-to-b from-[#f4fbfe] to-[#daf1fb]"
                : "relative flex shrink-0 items-center border-r border-[#e3e8ee]"
            }
            style={{ width: c.w, paddingLeft: i === 2 ? 10 : 5 }}
          >
            {i === 1 && <span className="absolute top-[1px] left-[17px]"><Down w={7} h={3} fill="#6f9db8" /></span>}
            <Fit w={c.hw} className={i === 1 ? "" : "ml-[1px]"}>{c.head}</Fit>
          </div>
        ))}
      </div>
      <div className="relative flex h-[86px] bg-[repeating-linear-gradient(transparent_0_18px,#f1f1f1_18px_19px)]">
        <div className={`flex w-[31px] justify-center pt-[4px] pr-[3px] ${colLine}`}><Check /></div>
        {columns.map((c, i) => (
          <div
            key={c.head}
            className={`pt-[2px] ${colLine} ${i === 1 ? "bg-[#f3f3f3]" : ""} ${i === 2 ? "text-[#f0001e]" : ""}`}
            style={{ width: c.w, paddingLeft: c.pad }}
          >
            <Fit w={c.cw}>{c.cell}</Fit>
          </div>
        ))}
      </div>
      <div className="flex h-[23px] border-t-2 border-[#7d8092]">
        <div className={`w-[31px] ${colLine}`} />
        {columns.map((c, i) => (
          <div key={c.head} className={`pt-[2px] text-[#f0001e] ${colLine}`} style={{ width: c.w, paddingLeft: c.pad }}>
            {i === 2 && <Fit w={28}>($5....</Fit>}
          </div>
        ))}
      </div>
    </div>
  );
}

function TransactionsPanel() {
  return (
    <section className="mt-[5px] flex h-[263px] flex-col rounded-tl-[8px] border border-r-0 border-[#a0a0a0]">
      <Tabs />
      <TitleStrip icon={<ListCoins />} className="mt-[6px] -mr-[1px]">
        <Fit w={171}>Encounter: 1442, 06/01/2017 -</Fit>
      </TitleStrip>
      <div className="flex h-[44px] shrink-0 items-center pt-[4px] pl-[7px]">
        <Svg w={6} h={10}><path d="M0 0v10l5.500-5Z" fill="#000" /></Svg>
        <Fit w={31} className={`ml-[5px] ${link}`}>Filters</Fit>
        <div className="ml-[15px] flex h-[21px] w-[178px] items-center border border-[#a3a7b0] bg-white pl-[4px] text-[#777]">
          <Fit w={35}>Search</Fit>
          <div className="mr-[1px] ml-auto flex h-[17px] w-[16px] items-center justify-center bg-[#f0f0f0]"><Down w={7} h={4} fill="#555" /></div>
        </div>
      </div>
      <TransactionTable />
      <div className="flex h-[18px] shrink-0 items-center pl-[2px]"><Fit w={88}>Summing 1 Item</Fit></div>
      <div className="flex gap-[4px] pl-[474px]">
        <Svg w={8} h={6}><path d="M0 5h8L4 1Z" fill="#605e9c" /></Svg>
        <Svg w={9} h={6}><path d="M0 0h9v1.500H6L8.500 4.500V6H0V4.500h1L3.500 1.500H0Z" fill="#605e9c" /></Svg>
      </div>
    </section>
  );
}

/* ---------- context menu ---------- */

type Item = { t: string; w: number; icon?: ReactNode; off?: boolean };
const items: Item[] = [
  { t: "Add Billing Hold", w: 87, icon: <HoldIcon /> },
  { t: "Add Image", w: 58, icon: <PlusIcon /> },
  { t: "Add Rate Code", w: 79 },
  { t: "Apply Action Code", w: 100, icon: <BoltIcon /> },
  { t: "Apply Adjustment", w: 96 },
  { t: "Apply Comment", w: 88, icon: <NoteIcon /> },
  { t: "Apply Self Pay Remittance", w: 138, icon: <EnvelopeIcon /> },
  { t: "Assign to Collections", w: 111, icon: <AssignIcon rim="#d8300c" /> },
  { t: "Assign to Pre-Collections", w: 133, icon: <AssignIcon rim="#2352b0" /> },
  { t: "Charge Entry", w: 68, icon: <ChargeIcon /> },
  { t: "Charge Viewer", w: 76, icon: <ViewerIcon /> },
  { t: "Estimate Patient Liability", w: 129, icon: <PapersPerson /> },
  { t: "Financial Combine", w: 99, off: true },
  { t: "Financial Uncombine", w: 112, off: true },
  { t: "Formal Payment Plan", w: 113, off: true },
  { t: "Generate Inquiry Letter", w: 120 },
  { t: "Generate Statement", w: 104, icon: <PapersPerson /> },
  { t: "Identify Work Item", w: 98, icon: <WorkIcon /> },
  { t: "Move Charges", w: 76 },
  { t: "Open ProFile", w: 68 },
  { t: "Reg: PMCoreReg", w: 89 },
  { t: "Reg: ProFit", w: 57 },
  { t: "Remove Formal Payment Plan", w: 159, off: true },
  { t: "Remove from Collections", w: 134, off: true },
  { t: "Statement Cycle", w: 86 },
  { t: "View Collections History", w: 128 },
];

function ContextMenu() {
  return (
    <div className="absolute top-[150px] left-[775px] flex h-[578px] w-[249px] flex-col border border-[#979797] bg-[#f7f7f7] pt-[2px]">
      {items.map((it) => (
        <div key={it.t} className="flex h-[22px] shrink-0 items-center pl-[5px]">
          <div className="w-[16px]">{it.icon}</div>
          <div className="mr-[5px] ml-[7px] h-full w-[1px] bg-[#e2e3e3]" />
          <Fit w={it.w} className={it.off ? "text-[#777]" : ""}>{it.t}</Fit>
        </div>
      ))}
    </div>
  );
}

/* ---------- task bar ---------- */

function TaskBar() {
  const running = "flex h-[39px] w-[59px] items-center justify-center rounded-[3px] border border-[#55677e] bg-gradient-to-br from-[#dfe5ef] via-[#b9cbe0] to-[#a9c0db] shadow-[inset_0_0_0_1px_#dce6f2]";
  return (
    <div className="flex h-[40px] items-center border-t border-[#2c3b4c] bg-[linear-gradient(90deg,#8696b0_0_58px,#a6c3e0_60px_790px,#8696b0_860px_1024px)] pl-[8px]">
      <StartOrb />
      <div className={`ml-[15px] ${running}`}><Explorer /></div>
      <div className="ml-[17px]"><IE /></div>
      <div className="ml-[29px]"><Firefox /></div>
      <div className={`ml-[17px] ${running}`}><Chrome /></div>
      <div className={`ml-[3px] ${running}`}><GreenR /></div>
      <div className="ml-auto"><Svg w={9} h={5}><path d="M0 5h9L4.500 0Z" fill="#fff" stroke="#66738c" strokeWidth=".5" /></Svg></div>
      <div className="ml-[12px]"><Speaker /></div>
      <div className="ml-[8px]"><Network /></div>
      <div className="ml-[9px]"><Flag /></div>
      <div className="ml-[15px] flex w-[53px] flex-col items-center text-white">
        <Fit w={50} className="leading-[17px]">10:50 AM</Fit>
        <Fit w={53} className="leading-[17px]">1/31/2018</Fit>
      </div>
      <div className="ml-[10px] h-[39px] w-[14px] border border-[#3e4e66] bg-gradient-to-b from-[#7788a4] to-[#9caac0]" />
    </div>
  );
}

export default function App() {
  return (
    <div className="relative flex h-[768px] w-[1024px] flex-col overflow-hidden bg-[#f7f7f7] font-[Open_Sans,Noto_Sans,sans-serif] text-[11.5px] leading-[16px] text-black">
      <Gradients />
      <TitleBar />
      <MenuBar />
      <ToolBar />
      <div className="flex h-[651px] shrink-0">
        <SideBar />
        <main className="flex min-w-0 flex-1 flex-col">
          <Banner />
          <Breadcrumb />
          <div className="flex gap-[4px]">
            <PatientAccountPanel />
            <EncountersPanel />
          </div>
          <TransactionsPanel />
          <div className="flex h-[25px] items-center pl-[337px]">
            <Fit w={182}>System Time: 1/31/2018 10:50 CST</Fit>
            <Fit w={25} className="ml-[5px]">User:</Fit>
            <Fit w={187} className="ml-[7px]">ma046396@15stpeng.northamerica</Fit>
          </div>
        </main>
      </div>
      <TaskBar />
      <ContextMenu />
    </div>
  );
}
